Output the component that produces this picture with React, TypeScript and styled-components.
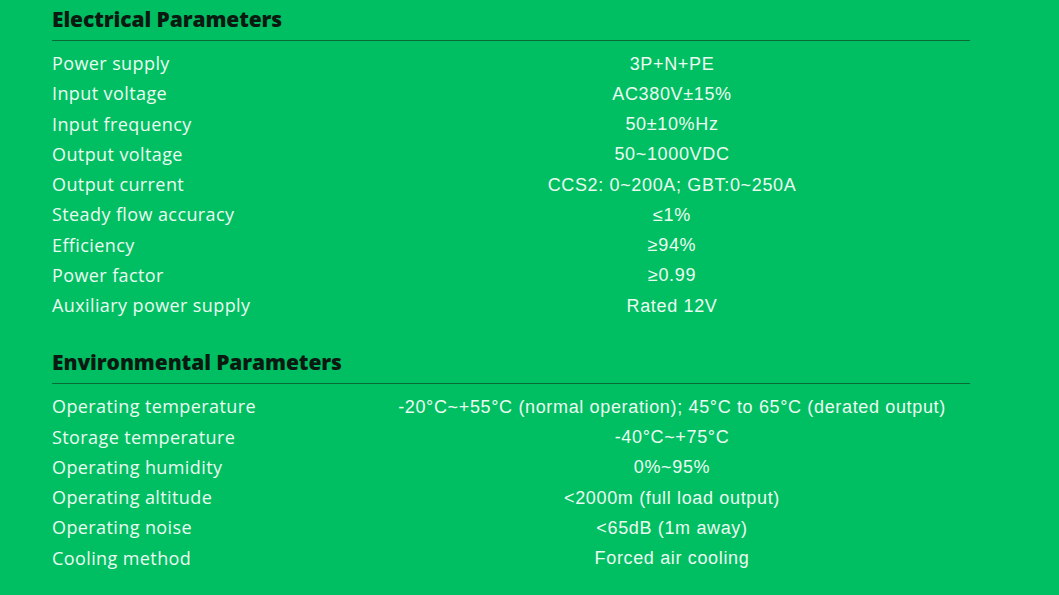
import { Fragment } from "react";
import styled, { createGlobalStyle } from "styled-components";

const GlobalStyle = createGlobalStyle`
  html, body {
    margin: 0;
    padding: 0;
    background-color: #00bf63;
  }
`;

const Page = styled.main`
  width: 1059px;
  height: 595px;
  box-sizing: border-box;
  padding: 5px 89px 0 52px;
  background-color: #00bf63;
  overflow: hidden;
`;

const Section = styled.section<{ $gap?: number }>`
  margin-top: ${(p) => p.$gap ?? 0}px;
`;

const Heading = styled.h2`
  margin: 0;
  padding-bottom: 7px;
  font-family: "Open Sans", "Liberation Sans", sans-serif;
  font-weight: 800;
  font-size: 21px;
  line-height: 28px;
  color: #0b1a10;
  letter-spacing: -0.1px;
  border-bottom: 1px solid #0a6a33;
`;

const SpecList = styled.dl`
  margin: 8px 0 0;
  display: grid;
  grid-template-columns: 322px 1fr;
  grid-auto-rows: 30.25px;
  align-items: center;
`;

const Label = styled.dt`
  font-family: "Open Sans", "Liberation Sans", sans-serif;
  font-size: 18px;
  line-height: 28px;
  margin-top: -2px;
  letter-spacing: 0.4px;
  color: #ecfbf1;
`;

const Value = styled.dd`
  margin: 0;
  text-align: center;
  font-family: "Liberation Sans", Arial, sans-serif;
  font-size: 18px;
  letter-spacing: 0.65px;
  color: #ecfbf1;
`;

type Spec = [string, string];

const electrical: Spec[] = [
  ["Power supply", "3P+N+PE"],
  ["Input voltage", "AC380V±15%"],
  ["Input frequency", "50±10%Hz"],
  ["Output voltage", "50~1000VDC"],
  ["Output current", "CCS2: 0~200A; GBT:0~250A"],
  ["Steady flow accuracy", "≤1%"],
  ["Efficiency", "≥94%"],
  ["Power factor", "≥0.99"],
  ["Auxiliary power supply", "Rated 12V"],
];

const environmental: Spec[] = [
  [
    "Operating temperature",
    "-20°C~+55°C (normal operation); 45°C to 65°C (derated output)",
  ],
  ["Storage temperature", "-40°C~+75°C"],
  ["Operating humidity", "0%~95%"],
  ["Operating altitude", "<2000m (full load output)"],
  ["Operating noise", "<65dB (1m away)"],
  ["Cooling method", "Forced air cooling"],
];

function SpecTable({ title, rows, gap }: { title: string; rows: Spec[]; gap?: number }) {
  return (
    <Section $gap={gap}>
      <Heading>{title}</Heading>
      <SpecList>
        {rows.map(([label, value]) => (
          <Fragment key={label}>
            <Label>{label}</Label>
            <Value>{value}</Value>
          </Fragment>
        ))}
      </SpecList>
    </Section>
  );
}

export default function App() {
  return (
    <>
      <GlobalStyle />
      <Page>
        <SpecTable title="Electrical Parameters" rows={electrical} />
        <SpecTable title="Environmental Parameters" rows={environmental} gap={27} />
      </Page>
    </>
  );
}
